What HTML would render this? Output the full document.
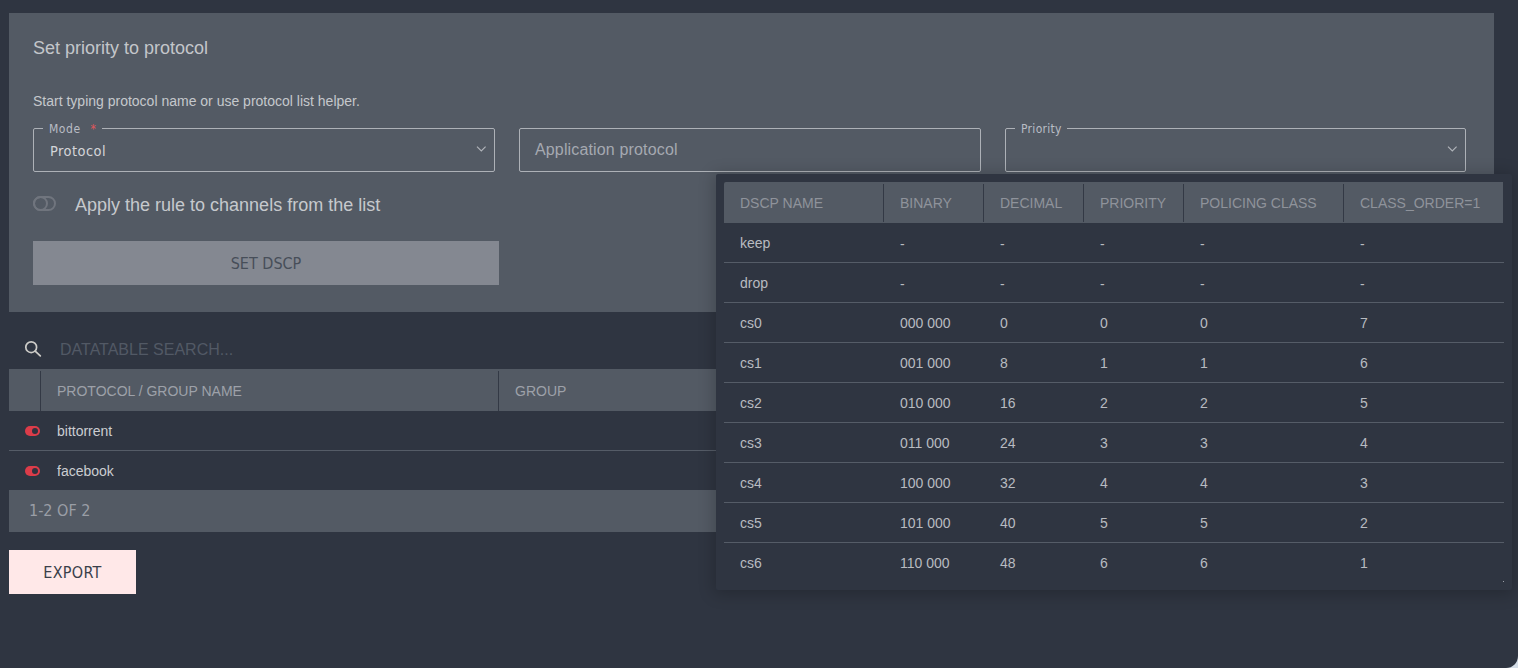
<!DOCTYPE html>
<html><head><meta charset="utf-8">
<style>
*{box-sizing:border-box;margin:0;padding:0}
html,body{width:1518px;height:668px;overflow:hidden;background:#d5dee8;font-family:"Liberation Sans",Arial,sans-serif;}
#app{position:absolute;left:0;top:0;width:1518px;height:668px;background:#2f3541;border-bottom-right-radius:12px;overflow:hidden}
.abs{position:absolute}
.panel{left:9px;top:13px;width:1485px;height:299px;background:#535a64}
.title{left:33px;top:37px;font-size:18px;line-height:22px;color:#c3c6ca;white-space:nowrap}
.hint{left:33px;top:92px;font-size:14px;line-height:18px;color:#c5c8cc;white-space:nowrap}
.field{height:44px;border:1px solid #adb1b7;border-radius:2px}
.legend{top:-7px;left:9px;padding:0 6px;background:#535a64;font-size:12px;line-height:14px;color:#b9bdc4;white-space:nowrap;letter-spacing:.55px;font-family:"DejaVu Sans Condensed","Liberation Sans",sans-serif}
.legend b{color:#e0565b;font-weight:normal;margin-left:6px;letter-spacing:0}
.val{left:16px;top:13px;font-size:14.5px;line-height:18px;color:#d3d5d9;letter-spacing:.45px;font-family:"DejaVu Sans Condensed","Liberation Sans",sans-serif}
.chev{right:8px;top:17px;width:10px;height:7px}
.ph{left:15px;top:11px;font-size:16px;line-height:20px;color:#a5a9b1;letter-spacing:.15px}
.toggle{left:33px;top:196px;width:23px;height:15px;border:2px solid #70757e;border-radius:8px}
.toggle i{position:absolute;left:-2px;top:-2px;width:15px;height:15px;border:2px solid #70757e;border-radius:50%}
.tlabel{left:75px;top:194px;font-size:18px;line-height:22px;color:#c6c9cd;white-space:nowrap}
.btn{left:33px;top:241px;width:466px;height:44px;background:#848891;color:#474e59;font-size:16px;line-height:46px;text-align:center;font-family:"DejaVu Sans Condensed","Liberation Sans",sans-serif}
.search{left:60px;top:340px;font-size:16px;line-height:20px;color:#525965;white-space:nowrap}
.thead{left:9px;top:369px;width:1485px;height:42px;background:#535a64}
.th{font-size:14px;line-height:18px;color:#9da1a9;white-space:nowrap;top:13px}
.sep{top:2px;width:1px;height:40px;background:#333945}
.row{left:9px;width:1485px;height:40px;border-bottom:1px solid #555c67}
.row span{position:absolute;left:48px;top:11px;font-size:14px;line-height:18px;color:#cbcdd1}
.pill{left:16px;top:15px;width:15px;height:10px;border-radius:5px;background:#dc3c49}
.pill i{position:absolute;right:2px;top:2px;width:6px;height:6px;border-radius:50%;background:#30323f}
.foot{left:9px;top:490px;width:1485px;height:42px;background:#535a64}
.foot span{position:absolute;left:20px;top:11px;font-size:16px;line-height:20px;color:#9a9ea6;font-family:"DejaVu Sans Condensed","Liberation Sans",sans-serif}
.export{left:9px;top:550px;width:127px;height:44px;background:#ffe8e8;color:#3a3f4a;font-size:16px;line-height:46px;letter-spacing:.3px;text-align:center;font-family:"DejaVu Sans Condensed","Liberation Sans",sans-serif}
.pop{left:716px;top:174px;width:796px;height:416px;background:#2f3541;border-radius:2px;box-shadow:0 2px 16px 2px rgba(0,0,0,.21)}
.phead{left:8px;top:8px;width:779px;height:41px;background:#535a64;border-radius:2px 0 0 0}
.phead .sep{height:38px}
.phead .th{top:12px;color:#8f939b}
.prow{left:8px;width:780px;height:40px;border-bottom:1px solid #555c67}
.prow span{position:absolute;top:11px;font-size:14px;line-height:18px;color:#b8bbc0;white-space:nowrap}
.prow span.d{top:12px}
.c1{left:16px}.c2{left:176px}.c3{left:276px}.c4{left:376px}.c5{left:476px}.c6{left:636px}
</style></head><body>
<div id="app">
<div class="abs panel"></div>
<div class="abs title">Set priority to protocol</div>
<div class="abs hint">Start typing protocol name or use protocol list helper.</div>

<div class="abs field" style="left:33px;top:128px;width:462px">
  <div class="abs legend">Mode <b>*</b></div>
  <div class="abs val">Protocol</div>
  <svg class="abs chev" viewBox="0 0 10 7"><path d="M1 0.7 L5.3 5 L9.6 0.7" fill="none" stroke="#b0b4ba" stroke-width="1.15"/></svg>
</div>
<div class="abs field" style="left:519px;top:128px;width:462px">
  <div class="abs ph">Application protocol</div>
</div>
<div class="abs field" style="left:1005px;top:128px;width:461px">
  <div class="abs legend" style="letter-spacing:.3px;padding-right:5px">Priority</div>
  <svg class="abs chev" viewBox="0 0 10 7"><path d="M1 0.7 L5.3 5 L9.6 0.7" fill="none" stroke="#b0b4ba" stroke-width="1.15"/></svg>
</div>

<div class="abs toggle"><i></i></div>
<div class="abs tlabel">Apply the rule to channels from the list</div>
<div class="abs btn">SET DSCP</div>

<svg class="abs" style="left:24px;top:340px;width:18px;height:18px" viewBox="0 0 18 18"><circle cx="7.2" cy="7.2" r="5.4" fill="none" stroke="#cdccc8" stroke-width="1.7"/><path d="M11.2 11.2 L16.3 15.9" stroke="#cdccc8" stroke-width="1.8" stroke-linecap="round"/></svg>
<div class="abs search">DATATABLE SEARCH...</div>

<div class="abs thead">
  <div class="abs sep" style="left:31px"></div>
  <div class="abs th" style="left:48px">PROTOCOL / GROUP NAME</div>
  <div class="abs sep" style="left:489px"></div>
  <div class="abs th" style="left:506px">GROUP</div>
</div>
<div class="abs row" style="top:411px"><div class="abs pill"><i></i></div><span>bittorrent</span></div>
<div class="abs row" style="top:451px;border-bottom:none"><div class="abs pill"><i></i></div><span>facebook</span></div>
<div class="abs foot"><span>1-2 OF 2</span></div>
<div class="abs export">EXPORT</div>

<div class="abs pop">
  <div class="abs phead">
    <div class="abs th c1">DSCP NAME</div>
    <div class="abs sep" style="left:159px"></div>
    <div class="abs th c2">BINARY</div>
    <div class="abs sep" style="left:259px"></div>
    <div class="abs th c3">DECIMAL</div>
    <div class="abs sep" style="left:359px"></div>
    <div class="abs th c4">PRIORITY</div>
    <div class="abs sep" style="left:459px"></div>
    <div class="abs th c5">POLICING CLASS</div>
    <div class="abs sep" style="left:619px"></div>
    <div class="abs th c6">CLASS_ORDER=1</div>
  </div>
  <div class="abs prow" style="top:49px"><span class="c1">keep</span><span class="c2 d">-</span><span class="c3 d">-</span><span class="c4 d">-</span><span class="c5 d">-</span><span class="c6 d">-</span></div>
  <div class="abs prow" style="top:89px"><span class="c1">drop</span><span class="c2 d">-</span><span class="c3 d">-</span><span class="c4 d">-</span><span class="c5 d">-</span><span class="c6 d">-</span></div>
  <div class="abs prow" style="top:129px"><span class="c1">cs0</span><span class="c2">000 000</span><span class="c3">0</span><span class="c4">0</span><span class="c5">0</span><span class="c6">7</span></div>
  <div class="abs prow" style="top:169px"><span class="c1">cs1</span><span class="c2">001 000</span><span class="c3">8</span><span class="c4">1</span><span class="c5">1</span><span class="c6">6</span></div>
  <div class="abs prow" style="top:209px"><span class="c1">cs2</span><span class="c2">010 000</span><span class="c3">16</span><span class="c4">2</span><span class="c5">2</span><span class="c6">5</span></div>
  <div class="abs prow" style="top:249px"><span class="c1">cs3</span><span class="c2">011 000</span><span class="c3">24</span><span class="c4">3</span><span class="c5">3</span><span class="c6">4</span></div>
  <div class="abs prow" style="top:289px"><span class="c1">cs4</span><span class="c2">100 000</span><span class="c3">32</span><span class="c4">4</span><span class="c5">4</span><span class="c6">3</span></div>
  <div class="abs prow" style="top:329px"><span class="c1">cs5</span><span class="c2">101 000</span><span class="c3">40</span><span class="c4">5</span><span class="c5">5</span><span class="c6">2</span></div>
  <div class="abs prow" style="top:369px;border-bottom:none"><span class="c1">cs6</span><span class="c2">110 000</span><span class="c3">48</span><span class="c4">6</span><span class="c5">6</span><span class="c6">1</span></div>
</div>
<div class="abs" style="left:1503px;top:581px;width:1px;height:1px;background:#9da1a8"></div>
</div>
</body></html>
